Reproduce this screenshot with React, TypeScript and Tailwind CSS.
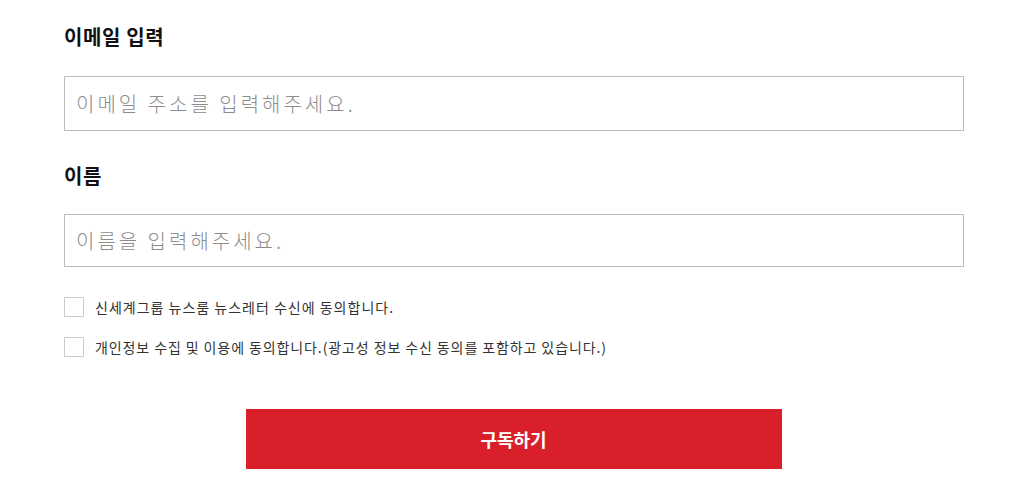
import React from "react";

export default function App() {
  const font = { fontFamily: '"Noto Sans CJK KR", "Noto Sans", sans-serif' };
  return (
    <div className="bg-white w-[1036px] h-[492px] pl-[64px] pt-[22px]" style={font}>
      <div className="w-[900px] flex flex-col">
        <h2 className="text-[20px] leading-[30px] font-bold text-[#111] tracking-[0.6px]">이메일 입력</h2>
        <input
          className="mt-[24px] h-[55px] w-full border border-[#bdbdbd] px-[11px] text-[20px] font-light tracking-[3px] outline-none placeholder:text-[#8c8c8c]"
          placeholder="이메일 주소를 입력해주세요."
        />
        <h2 className="mt-[30px] text-[20px] leading-[30px] font-bold text-[#111] tracking-[0.6px]">이름</h2>
        <input
          className="mt-[23px] h-[53px] w-full border border-[#bdbdbd] px-[11px] text-[20px] font-light tracking-[3px] outline-none placeholder:text-[#8c8c8c]"
          placeholder="이름을 입력해주세요."
        />
        <label className="mt-[30px] flex items-center gap-[11px]">
          <span className="w-[20px] h-[20px] border border-[#ccc] bg-white" />
          <span className="text-[14px] leading-[20px] tracking-[1px] text-[#333]">신세계그룹 뉴스룸 뉴스레터 수신에 동의합니다.</span>
        </label>
        <label className="mt-[20px] flex items-center gap-[11px]">
          <span className="w-[20px] h-[20px] border border-[#ccc] bg-white" />
          <span className="text-[14px] leading-[20px] tracking-[0.9px] text-[#333]">
            개인정보 수집 및 이용에 동의합니다.(광고성 정보 수신 동의를 포함하고 있습니다.)
          </span>
        </label>
        <button className="mt-[52px] self-center mr-[1px] w-[536px] h-[60px] bg-[#d9202a] text-white text-[18px] font-bold">
          구독하기
        </button>
      </div>
    </div>
  );
}
